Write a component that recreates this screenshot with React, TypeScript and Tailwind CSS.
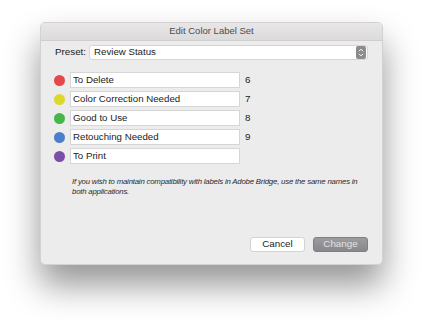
const labels = [
  { name: "To Delete", color: "bg-[#e4484d]", key: "6" },
  { name: "Color Correction Needed", color: "bg-[#ded826]", key: "7" },
  { name: "Good to Use", color: "bg-[#47b64a]", key: "8" },
  { name: "Retouching Needed", color: "bg-[#4a7fce]", key: "9" },
  { name: "To Print", color: "bg-[#7b4fa6]", key: "" },
];

export default function App() {
  return (
    <div
      className="w-[422px] h-[322px] bg-white pt-[22px] pl-[40px]"
      style={{ fontFamily: '"Liberation Sans", Arial, sans-serif' }}
    >
      <div className="w-[343px] h-[243px] rounded-[5px] bg-[#ececec] border border-[#d2d2d2] shadow-[0_20px_34px_rgba(0,0,0,0.42)] flex flex-col overflow-hidden">
        {/* Title bar */}
        <div className="h-[18px] bg-gradient-to-b from-[#e8e6e6] to-[#dcdada] border-b border-[#cfcfcf] flex items-center justify-center text-[9.5px] text-[#4d4d4d]">
          Edit Color Label Set
        </div>

        <div className="flex-1 flex flex-col px-[14px]">
          {/* Preset */}
          <div className="mt-[4px] flex items-center gap-[4px]">
            <span className="text-[9.8px] text-[#222] w-[30px]">Preset:</span>
            <div className="h-[15px] w-[279px] bg-white rounded-[3px] border border-[#d6d6d6] flex items-center justify-between pl-[4px]">
              <span className="text-[9.7px] text-[#222]">Review Status</span>
              <div className="h-[13px] w-[10px] mr-[1px] rounded-[2px] bg-[#8c8c8c] flex items-center justify-center">
                <svg width="6" height="9" viewBox="0 0 6 9" fill="none" stroke="white" strokeWidth="1">
                  <path d="M1 3.2 L3 1.2 L5 3.2" />
                  <path d="M1 5.8 L3 7.8 L5 5.8" />
                </svg>
              </div>
            </div>
          </div>

          {/* Labels */}
          <div className="mt-[12px] flex flex-col gap-[3px]">
            {labels.map((l) => (
              <div key={l.name} className="flex items-center h-[16px]">
                <div className={`w-[11px] h-[11px] rounded-full ${l.color} ml-[-1px]`} />
                <div className="ml-[5px] h-[16px] w-[170px] bg-white border border-[#d6d6d6] flex items-center pl-[2px] text-[9.7px] text-[#222]">
                  {l.name}
                </div>
                <span className="ml-[5px] text-[9.8px] text-[#222]">{l.key}</span>
              </div>
            ))}
          </div>

          {/* Note */}
          <p className="mt-[13px] ml-[17px] w-[290px] italic text-[7.8px] leading-[10px] text-[#2a2a2a] tracking-[-0.2px]">
            If you wish to maintain compatibility with labels in Adobe Bridge, use the same names in both applications.
          </p>

          {/* Buttons */}
          <div className="mt-auto mb-[12px] flex justify-end gap-[8px]">
            <button className="h-[15px] w-[55px] rounded-[3px] bg-white border border-[#d3d3d3] text-[9.8px] text-[#222] flex items-center justify-center">
              Cancel
            </button>
            <button className="h-[15px] w-[55px] rounded-[3px] bg-gradient-to-b from-[#9c9ca0] to-[#88888c] border border-[#808084] text-[9.8px] text-[#e2e2e2] flex items-center justify-center">
              Change
            </button>
          </div>
        </div>
      </div>
    </div>
  );
}
